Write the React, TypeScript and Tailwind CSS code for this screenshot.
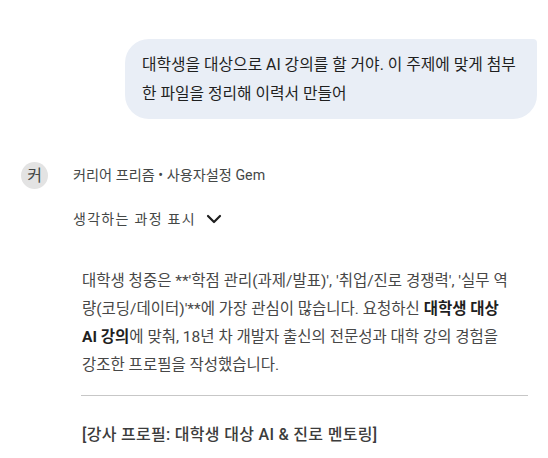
import { ChevronDown } from "lucide-react";

const font = { fontFamily: 'Roboto, "Noto Sans CJK KR", sans-serif' };

function UserBubble() {
  return (
    <div className="flex justify-end pr-[11px] pt-[39px]">
      <div className="w-[412px] rounded-[24px] rounded-tr-[4px] bg-[#e9eef6] px-[17px] py-[11px] text-[15.8px] leading-[29px] text-[#1f1f1f] whitespace-nowrap">
        대학생을 대상으로 AI 강의를 할 거야. 이 주제에 맞게 첨부
        <br />한 파일을 정리해 이력서 만들어
      </div>
    </div>
  );
}

function GemHeader() {
  return (
    <div className="mt-[43px] flex flex-col">
      <div className="flex items-center pl-[21px]">
        <div className="flex h-[27px] w-[27px] items-center justify-center rounded-full bg-[#e3e3e3] text-[16px] text-[#444746]">
          커
        </div>
        <div className="ml-[25px] text-[14.2px] text-[#444746]">
          커리어 프리즘 • 사용자설정 Gem
        </div>
      </div>
      <button className="mt-[18px] ml-[73px] flex items-center gap-[6px] text-[14px] tracking-[1.3px] text-[#444746]">
        생각하는 과정 표시
        <ChevronDown className="h-[24px] w-[24px] text-[#1f1f1f]" strokeWidth={2.2} />
      </button>
    </div>
  );
}

function Answer() {
  return (
    <div className="ml-[82px] mr-[20px] mt-[36px]">
      <p className="text-[15.5px] leading-[28px] text-[#474747] whitespace-nowrap">
        대학생 청중은 **'학점 관리(과제/발표)', '취업/진로 경쟁력', '실무 역
        <br />
        량(코딩/데이터)'**에 가장 관심이 많습니다. 요청하신{" "}
        <b className="font-bold text-[#1f1f1f]">대학생 대상</b>
        <br />
        <b className="font-bold text-[#1f1f1f]">AI 강의</b>에 맞춰, 18년 차 개발자 출신의 전문성과 대학 강의 경험을
        <br />
        강조한 프로필을 작성했습니다.
      </p>
      <hr className="mt-[16px] ml-[-1px] w-[447px] border-t border-[#c7c7c7]" />
      <div className="mt-[27px] text-[16px] font-medium tracking-[0.3px] text-[#3c3c3c]">
        [강사 프로필: 대학생 대상 AI &amp; 진로 멘토링]
      </div>
    </div>
  );
}

export default function App() {
  return (
    <div className="h-[458px] w-[548px] overflow-hidden bg-white" style={font}>
      <UserBubble />
      <GemHeader />
      <Answer />
    </div>
  );
}
